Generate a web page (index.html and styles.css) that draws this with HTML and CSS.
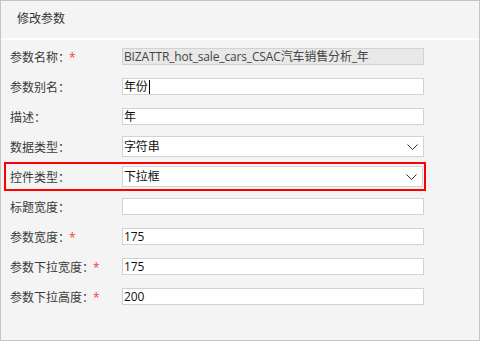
FILE: index.html
```html
<!DOCTYPE html>
<html lang="zh-CN">
<head>
<meta charset="utf-8">
<title>修改参数</title>
<link rel="stylesheet" href="styles.css">
</head>
<body>
<div class="dialog">
  <div class="header">修改参数</div>
  <div class="form">
    <div class="row">
      <div class="label">参数名称<span class="colon">：</span><span class="req">*</span></div>
      <div class="field disabled">BIZATTR_hot_sale_cars_CSAC汽车销售分析_年</div>
    </div>
    <div class="row">
      <div class="label">参数别名<span class="colon">：</span></div>
      <div class="field">年份<span class="caret"></span></div>
    </div>
    <div class="row">
      <div class="label">描述<span class="colon">：</span></div>
      <div class="field">年</div>
    </div>
    <div class="row sel">
      <div class="label">数据类型<span class="colon">：</span></div>
      <div class="field select"><span>字符串</span>
        <svg class="chev" width="11" height="6" viewBox="0 0 11 6"><polyline points="0.5,0.5 5.5,5.5 10.5,0.5" fill="none" stroke="#333" stroke-width="1"/></svg>
      </div>
    </div>
    <div class="row sel marked">
      <div class="label">控件类型<span class="colon">：</span></div>
      <div class="field select"><span>下拉框</span>
        <svg class="chev" width="11" height="6" viewBox="0 0 11 6"><polyline points="0.5,0.5 5.5,5.5 10.5,0.5" fill="none" stroke="#333" stroke-width="1"/></svg>
      </div>
    </div>
    <div class="row">
      <div class="label">标题宽度<span class="colon">：</span></div>
      <div class="field"></div>
    </div>
    <div class="row">
      <div class="label">参数宽度<span class="colon">：</span><span class="req">*</span></div>
      <div class="field">175</div>
    </div>
    <div class="row">
      <div class="label">参数下拉宽度<span class="colon">：</span><span class="req">*</span></div>
      <div class="field">175</div>
    </div>
    <div class="row">
      <div class="label">参数下拉高度<span class="colon">：</span><span class="req">*</span></div>
      <div class="field">200</div>
    </div>
  </div>
</div>
</body>
</html>
```
FILE: styles.css
```css
html, body {
  margin: 0;
  padding: 0;
  background: #f4f4f4;
}
.dialog {
  box-sizing: border-box;
  width: 480px;
  height: 341px;
  border: 1px solid #c4c4c4;
  background: #f4f4f4;
  font-family: "Open Sans", "Noto Sans CJK SC", sans-serif;
  font-size: 12px;
  color: #333;
}
.header {
  height: 37px;
  line-height: 36px;
  padding-left: 16px;
  border-bottom: 2px solid #ffffff;
  color: #333;
}
.form {
  padding: 2px 0 0 5px;
  width: 418px;
}
.row {
  box-sizing: border-box;
  height: 30px;
  padding: 6px 0 7px 4px;
  display: flex;
  align-items: center;
}
.row.sel {
  padding: 4px 0 5px 4px;
}
.row.marked {
  position: relative;
}
.row.marked::after {
  content: "";
  position: absolute;
  left: -2px;
  right: -2px;
  top: 0;
  bottom: 1px;
  border: 2px solid #ff0000;
  pointer-events: none;
}
.label {
  width: 112px;
  flex: none;
  white-space: nowrap;
  color: #3a3a3a;
  line-height: 17px;
}
.colon {
  font-family: "Noto Sans CJK TC", sans-serif;
}
.req {
  color: #f23c3c;
  margin-left: -1px;
}
.field {
  box-sizing: border-box;
  width: 302px;
  height: 17px;
  flex: none;
  border: 1px solid #d2d2d0;
  background: #ffffff;
  padding-left: 1px;
  line-height: 15px;
  color: #111;
  white-space: nowrap;
  overflow: hidden;
  display: flex;
  align-items: center;
  letter-spacing: -0.15px;
}
.field.disabled {
  background: #e8e8e8;
  color: #444;
}
.field.select {
  height: 21px;
  padding-right: 5px;
}
.marked .field.select {
  width: 301px;
}
.chev {
  margin-left: auto;
  display: block;
}
.caret {
  display: inline-block;
  width: 1px;
  height: 14px;
  background: #000;
  margin-left: 1px;
}
```
